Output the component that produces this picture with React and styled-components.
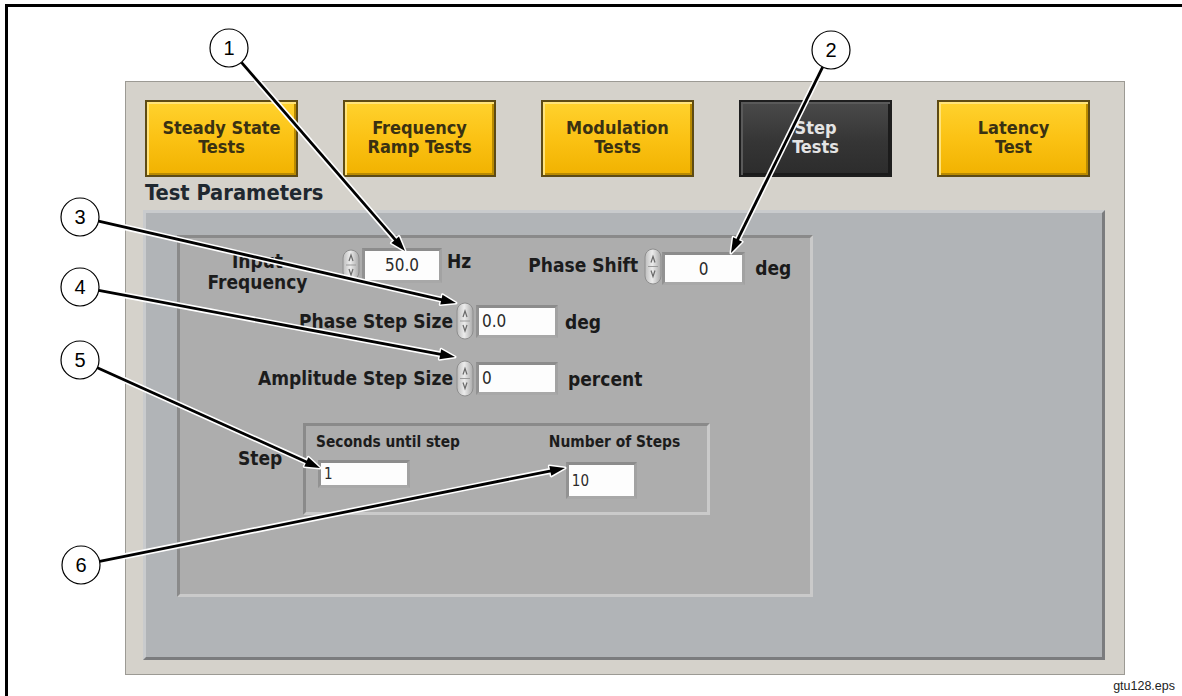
import React from 'react';
import styled, { createGlobalStyle } from 'styled-components';

const UI_FONT = `"DejaVu Sans Condensed", "DejaVu Sans", Verdana, sans-serif`;

const GlobalStyle = createGlobalStyle`
    html, body {
        margin: 0;
        padding: 0;
        background: #ffffff;
        overflow: hidden;
    }
    * {
        box-sizing: border-box;
    }
`;

const Stage = styled.div`
    position: relative;
    width: 1182px;
    height: 696px;
    padding: 4px 0 0 5px;
    overflow: hidden;
`;

const Sheet = styled.div`
    width: 1177px;
    height: 692px;
    border-top: 3px solid #000;
    border-left: 3px solid #000;
    display: flex;
    flex-direction: column;
`;

const Window = styled.div`
    margin: 74px 0 0 117px;
    width: 1000px;
    height: 594px;
    background: #d5d2cb;
    border: 1px solid #9c9a94;
    padding: 18px 0 0 19px;
    display: flex;
    flex-direction: column;
`;

const TabRow = styled.div`
    display: flex;
    gap: 45px;
`;

const TabButton = styled.div`
    width: 153px;
    height: 77px;
    display: flex;
    align-items: center;
    justify-content: center;
    text-align: center;
    font-family: ${UI_FONT};
    font-weight: bold;
    font-size: 18px;
    line-height: 19px;
    padding-bottom: 4px;
    color: ${p => (p.$active ? '#e4e4e4' : '#3a3112')};
    background: ${p => (p.$active
        ? 'linear-gradient(#4a4a4a, #353535 55%, #2c2c2c)'
        : 'linear-gradient(#ffd22e, #fbc214 50%, #f1b200)')};
    border: 2px solid ${p => (p.$active ? '#1e1e1e' : '#5e4b14')};
    box-shadow: ${p => (p.$active
        ? 'inset 2px 2px 0 #5a5a5a, inset -2px -2px 0 #1b1b1b'
        : 'inset 2px 2px 0 #ffe37a, inset -2px -2px 0 #b98a00')};
`;

const SectionTitle = styled.div`
    margin-top: 3px;
    font-family: ${UI_FONT};
    font-weight: bold;
    font-size: 21.7px;
    line-height: 26px;
    color: #1f2830;
`;

const ParamPanel = styled.div`
    margin: 4px 0 0 -2px;
    width: 962px;
    height: 450px;
    background: #b1b4b7;
    border: 3px solid;
    border-color: #c9cbcd #7b7c7e #7b7c7e #c9cbcd;
    padding: 22px 0 0 31px;
`;

const Cluster = styled.div`
    width: ${p => p.$w}px;
    height: ${p => p.$h}px;
    margin-left: ${p => p.$ml || 0}px;
    background: #adadad;
    border: 3px solid;
    border-color: #8a8a8a #cacaca #cacaca #8a8a8a;
    padding: ${p => p.$pad || '0'};
    display: flex;
    flex-direction: ${p => p.$dir || 'column'};
    flex-shrink: 0;
`;

const Row = styled.div`
    display: flex;
    align-items: center;
    height: ${p => p.$h}px;
    margin-top: ${p => p.$top || 0}px;
`;

const Label = styled.div`
    font-family: ${UI_FONT};
    font-weight: bold;
    font-size: ${p => p.$size || 19}px;
    line-height: 21px;
    color: #1c1c1c;
    white-space: nowrap;
    width: ${p => (p.$w ? `${p.$w}px` : 'auto')};
    text-align: ${p => p.$align || 'left'};
    margin-left: ${p => p.$ml || 0}px;
    margin-top: ${p => p.$mt || 0}px;
    margin-bottom: ${p => p.$mb || 0}px;
    flex-shrink: 0;
`;

const Unit = styled(Label)`
    color: #1a1a1a;
`;

const Field = styled.div`
    width: ${p => p.$w}px;
    height: ${p => p.$h || 33}px;
    margin-left: ${p => p.$ml || 0}px;
    margin-top: ${p => p.$mt || 0}px;
    background: #fdfdfd;
    border: 3px solid;
    border-color: #8c8c8c #a2a2a2 #a8a8a8 #929292;
    display: flex;
    align-items: center;
    justify-content: ${p => (p.$align === 'center' ? 'center' : 'flex-start')};
    padding-left: ${p => (p.$align === 'center' ? 0 : 3)}px;
    font-family: ${UI_FONT};
    font-size: ${p => p.$size || 17}px;
    color: #2a2a2a;
    flex-shrink: 0;
`;

const SpinWrap = styled.div`
    width: 18px;
    height: ${p => p.$h || 36}px;
    margin-left: ${p => p.$ml || 0}px;
    margin-top: ${p => p.$mt || 0}px;
    flex-shrink: 0;
    svg {
        display: block;
    }
`;

const StepColumn = styled.div`
    display: flex;
    flex-direction: column;
    align-items: flex-start;
    margin-left: ${p => p.$ml || 0}px;
`;

const FileTag = styled.div`
    margin-top: 4px;
    padding-right: 7px;
    text-align: right;
    font-family: "Liberation Sans", Arial, sans-serif;
    font-size: 12.5px;
    line-height: 14px;
    color: #222;
`;

const Overlay = styled.svg`
    position: absolute;
    left: 0;
    top: 0;
    pointer-events: none;
`;

const Spinner = ({ h = 36, ml, mt }) => (
    <SpinWrap $h={h} $ml={ml} $mt={mt}>
        <svg width="18" height={h} viewBox={`0 0 18 ${h}`}>
            <defs>
                <linearGradient id="spin" x1="0" x2="1" y1="0" y2="0">
                    <stop offset="0" stopColor="#bdbdbd" />
                    <stop offset="0.45" stopColor="#ececec" />
                    <stop offset="1" stopColor="#a9a9a9" />
                </linearGradient>
            </defs>
            <rect x="1" y="1" width="16" height={h - 2} rx="8" fill="url(#spin)" stroke="#8e8e8e" />
            <line x1="4" x2="14" y1={h / 2} y2={h / 2} stroke="#9a9a9a" strokeWidth="1" />
            <path d={`M7 ${h / 2 - 4} L9 ${h / 2 - 10} L11 ${h / 2 - 4}`} fill="none" stroke="#6a6a6a" strokeWidth="1.2" />
            <path d={`M7 ${h / 2 + 4} L9 ${h / 2 + 10} L11 ${h / 2 + 4}`} fill="none" stroke="#6a6a6a" strokeWidth="1.2" />
        </svg>
    </SpinWrap>
);

const callouts = [
    { n: 1, c: [229, 48], t: [405, 251] },
    { n: 2, c: [831, 50], t: [731, 253] },
    { n: 3, c: [80, 217], t: [456, 303] },
    { n: 4, c: [80, 287], t: [455, 357] },
    { n: 5, c: [80, 360], t: [320, 468] },
    { n: 6, c: [81, 565], t: [565, 468] },
];

const R = 19;

const Callout = ({ n, c, t }) => {
    const dx = t[0] - c[0];
    const dy = t[1] - c[1];
    const len = Math.hypot(dx, dy);
    const ux = dx / len;
    const uy = dy / len;
    const sx = c[0] + ux * R;
    const sy = c[1] + uy * R;
    const head = 15;
    const half = 5;
    const bx = t[0] - ux * head;
    const by = t[1] - uy * head;
    const pts = `${t[0]},${t[1]} ${bx - uy * half},${by + ux * half} ${bx + uy * half},${by - ux * half}`;
    return (
        <g>
            <line x1={sx} y1={sy} x2={bx} y2={by} stroke="#fff" strokeWidth="6" />
            <polygon points={pts} fill="#fff" stroke="#fff" strokeWidth="3" strokeLinejoin="round" />
            <line x1={sx} y1={sy} x2={bx + ux * 2} y2={by + uy * 2} stroke="#000" strokeWidth="2.8" />
            <polygon points={pts} fill="#000" />
            <circle cx={c[0]} cy={c[1]} r={R} fill="#fff" stroke="#000" strokeWidth="1.2" />
            <text
                x={c[0]}
                y={c[1] + 7}
                textAnchor="middle"
                fontFamily='"Liberation Sans", Arial, sans-serif'
                fontSize="20"
                fill="#000"
            >
                {n}
            </text>
        </g>
    );
};

const App = () => {
    return (
        <>
            <GlobalStyle />
            <Stage>
                <Sheet>
                    <Window>
                        <TabRow>
                            <TabButton>Steady State<br />Tests</TabButton>
                            <TabButton>Frequency<br />Ramp Tests</TabButton>
                            <TabButton>Modulation<br />Tests</TabButton>
                            <TabButton $active>Step<br />Tests</TabButton>
                            <TabButton>Latency<br />Test</TabButton>
                        </TabRow>
                        <SectionTitle>Test Parameters</SectionTitle>
                        <ParamPanel>
                            <Cluster $w={636} $h={362} $pad="7px 0 0 0">
                                <Row $h={40}>
                                    <Label $w={115} $ml={20} $align="center" $mt={14}>
                                        Input<br />Frequency
                                    </Label>
                                    <Spinner h={32} ml={27} />
                                    <Field $w={80} $h={35} $ml={2} $align="center">50.0</Field>
                                    <Unit $ml={5} $mb={8}>Hz</Unit>
                                    <Label $ml={57}>Phase Shift</Label>
                                    <Spinner h={37} ml={6} mt={3} />
                                    <Field $w={83} $h={33} $mt={7} $align="center">0</Field>
                                    <Unit $ml={10} $mt={6}>deg</Unit>
                                </Row>
                                <Row $h={38} $top={17}>
                                    <Label $w={273} $align="right">Phase Step Size</Label>
                                    <Spinner h={38} ml={3} />
                                    <Field $w={82} $h={33} $ml={2}>0.0</Field>
                                    <Unit $ml={7} $mt={3}>deg</Unit>
                                </Row>
                                <Row $h={38} $top={19}>
                                    <Label $w={273} $align="right">Amplitude Step Size</Label>
                                    <Spinner h={37} ml={3} />
                                    <Field $w={82} $h={33} $ml={2}>0</Field>
                                    <Unit $ml={10} $mt={3}>percent</Unit>
                                </Row>
                                <Row $h={92} $top={26}>
                                    <Label $w={48} $ml={58} $mb={22}>Step</Label>
                                    <Cluster $w={407} $h={92} $ml={17} $dir="row" $pad="6px 0 0 10px">
                                        <StepColumn>
                                            <Label $size={15.3}>Seconds until step</Label>
                                            <Field $w={92} $h={28} $ml={2} $mt={7} $size={15}>1</Field>
                                        </StepColumn>
                                        <StepColumn $ml={89}>
                                            <Label $size={15.4}>Number of Steps</Label>
                                            <Field $w={71} $h={37} $ml={17} $mt={9} $size={15}>10</Field>
                                        </StepColumn>
                                    </Cluster>
                                </Row>
                            </Cluster>
                        </ParamPanel>
                    </Window>
                    <FileTag>gtu128.eps</FileTag>
                </Sheet>
                <Overlay width="1182" height="696" viewBox="0 0 1182 696">
                    {callouts.map(c => (
                        <Callout key={c.n} {...c} />
                    ))}
                </Overlay>
            </Stage>
        </>
    );
};

export default App;
